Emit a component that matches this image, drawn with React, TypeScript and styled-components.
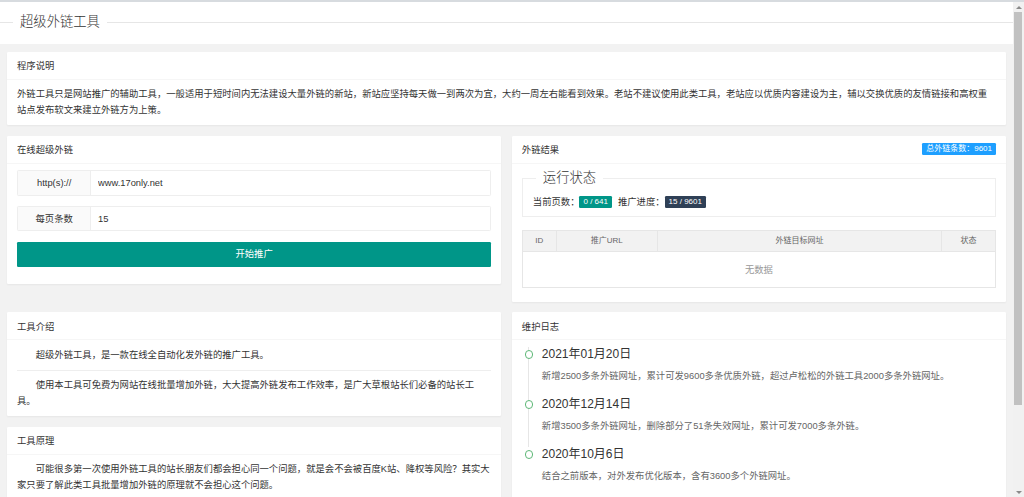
import React from "react";
import styled, { createGlobalStyle } from "styled-components";

const GlobalStyle = createGlobalStyle`
  * { box-sizing: border-box; }
  html, body { margin: 0; height: 100%; overflow: hidden; }
  body {
    font-family: "Liberation Sans", "Noto Sans CJK SC", sans-serif;
    font-size: 9.333px;
    color: #333;
    text-spacing-trim: space-all;
  }
  #root { height: 100%; }
`;

const Window = styled.div`
  height: 100%;
  display: flex;
  border-top: 2px solid #d7dbdf;
  background: #f2f2f2;
`;

const Viewport = styled.div`
  flex: 1;
  min-width: 0;
  overflow: hidden;
`;

const Rail = styled.div`
  width: 11px;
  flex: none;
  display: flex;
  flex-direction: column;
  background: #f1f1f1;
`;

const RailButton = styled.div<{ $dir: "up" | "down" }>`
  height: 10px;
  flex: none;
  display: flex;
  align-items: center;
  justify-content: center;
  &::before {
    content: "";
    width: 0;
    height: 0;
    border-left: 3px solid transparent;
    border-right: 3px solid transparent;
    ${(p) =>
      p.$dir === "up"
        ? "border-bottom: 3px solid #8a8a8a;"
        : "border-top: 3px solid #8a8a8a;"}
  }
`;

const RailTrack = styled.div`
  flex: 1;
  display: flex;
  flex-direction: column;
`;

const Thumb = styled.div`
  height: 393px;
  margin: 0 2px 0 1px;
  background: #c1c1c1;
`;

const Header = styled.header`
  background: #fff;
  height: 42px;
  padding-top: 10px;
`;

const TitleField = styled.fieldset`
  margin: 0;
  padding: 0;
  border: none;
  border-top: 1px solid #e6e6e6;
`;

const TitleLegend = styled.legend`
  margin-left: 13.33px;
  padding: 0 6.67px;
  font-size: 13.33px;
  line-height: 20px;
  font-weight: 300;
  color: #333;
`;

const Page = styled.main`
  padding: 7.67px 7px 7px;
  display: flex;
  flex-direction: column;
  gap: 10.67px;
`;

const Row = styled.div`
  display: grid;
  grid-template-columns: 1fr 1fr;
  gap: 10.67px;
  align-items: start;
`;

const Column = styled.div`
  display: flex;
  flex-direction: column;
  gap: 10.67px;
`;

const Card = styled.section`
  background: #fff;
  border-radius: 1.33px;
  box-shadow: 0 1px 2px 0 rgba(0, 0, 0, 0.05);
`;

const CardHeader = styled.div`
  height: 28px;
  padding: 0 10px;
  border-bottom: 1px solid #f6f6f6;
  color: #333;
  display: flex;
  align-items: center;
  justify-content: space-between;
`;

const CardBody = styled.div`
  padding: 6.67px 10px;
  line-height: 16px;
`;

const Para = styled.p<{ $indent?: boolean }>`
  margin: 0;
  text-indent: ${(p) => (p.$indent ? "2em" : "0")};
`;

const Rule = styled.hr`
  margin: 6.67px 0;
  height: 1px;
  border: none;
  background: #eee;
`;

const InputGroup = styled.div`
  display: flex;
  height: 25.33px;
  border: 1px solid #eee;
  border-radius: 1.33px;
  margin-bottom: 10.33px;
`;

const InputLabel = styled.label`
  width: 73.33px;
  flex: none;
  background: #fafafa;
  border-right: 1px solid #eee;
  display: flex;
  align-items: center;
  justify-content: center;
  color: #333;
`;

const TextInput = styled.input`
  flex: 1;
  min-width: 0;
  border: none;
  padding: 0 6.67px;
  font: inherit;
  color: #333;
  background: #fff;
  outline: none;
`;

const PrimaryButton = styled.button`
  display: block;
  width: 100%;
  height: 25.33px;
  margin-bottom: 10px;
  background: #009688;
  color: #fff;
  border: none;
  border-radius: 1.33px;
  font: inherit;
  cursor: pointer;
`;

const Badge = styled.span<{ $bg: string }>`
  display: inline-block;
  height: 12px;
  line-height: 12px;
  padding: 0 4px;
  font-size: 8px;
  color: #fff;
  border-radius: 1.33px;
  background: ${(p) => p.$bg};
`;

const StatusField = styled.fieldset`
  margin: 0;
  padding: 0 10px 6.67px;
  border: 1px solid #eee;
`;

const StatusLegend = styled.legend`
  margin-left: 3.33px;
  padding: 0 6.67px;
  font-size: 13.33px;
  line-height: 16.67px;
  font-weight: 300;
  color: #333;
`;

const StatusRow = styled.div`
  display: flex;
  align-items: center;
  height: 16px;
  margin-top: 6.67px;
  & > ${Badge} {
    margin-right: 6px;
  }
`;

const Table = styled.table`
  width: 100%;
  margin: 12.33px 0 6.67px;
  border-collapse: collapse;
  table-layout: fixed;
`;

const Th = styled.th`
  height: 21.67px;
  padding: 0;
  border: 1px solid #e6e6e6;
  background: #f2f2f2;
  color: #666;
  font-size: 8px;
  font-weight: 400;
  text-align: center;
`;

const EmptyCell = styled.td`
  height: 36px;
  border: 1px solid #e6e6e6;
  text-align: center;
  color: #999;
`;

const Timeline = styled.ul`
  list-style: none;
  margin: 0;
  padding: 0 0 0 3.33px;
`;

const TimelineItem = styled.li`
  position: relative;
  padding-bottom: 12.67px;
  &::before {
    content: "";
    position: absolute;
    left: 3.33px;
    top: 0;
    width: 1px;
    height: 100%;
    background: #e6e6e6;
  }
  &:last-child::before {
    display: none;
  }
`;

const TimelineAxis = styled.i`
  position: absolute;
  left: -0.67px;
  top: 3px;
  width: 8.67px;
  height: 8.67px;
  border: 1.33px solid #5fb878;
  border-radius: 50%;
  background: #fff;
  z-index: 1;
`;

const TimelineContent = styled.div`
  padding-left: 16.67px;
`;

const TimelineTitle = styled.h3`
  margin: 0 0 6.67px;
  font-size: 12px;
  line-height: 14.67px;
  font-weight: 400;
  color: #333;
`;

const TimelineText = styled.p`
  margin: 0;
  line-height: 16px;
  color: #666;
`;

const logs = [
  {
    date: "2021年01月20日",
    text: "新增2500多条外链网址，累计可发9600多条优质外链，超过卢松松的外链工具2000多条外链网址。",
  },
  {
    date: "2020年12月14日",
    text: "新增3500多条外链网址，删除部分了51条失效网址，累计可发7000多条外链。",
  },
  {
    date: "2020年10月6日",
    text: "结合之前版本，对外发布优化版本，含有3600多个外链网址。",
  },
];

const columns = [
  { label: "ID", w: 34 },
  { label: "推广URL", w: 101 },
  { label: "外链目标网址", w: undefined },
  { label: "状态", w: 54 },
];

export default function App() {
  return (
    <>
      <GlobalStyle />
      <Window>
        <Viewport>
          <Header>
            <TitleField>
              <TitleLegend>超级外链工具</TitleLegend>
            </TitleField>
          </Header>
          <Page>
            <Card>
              <CardHeader>程序说明</CardHeader>
              <CardBody>
                <Para>
                  外链工具只是网站推广的辅助工具，一般适用于短时间内无法建设大量外链的新站，新站应坚持每天做一到两次为宜，大约一周左右能看到效果。老站不建议使用此类工具，老站应以优质内容建设为主，辅以交换优质的友情链接和高权重站点发布软文来建立外链方为上策。
                </Para>
              </CardBody>
            </Card>

            <Row>
              <Card>
                <CardHeader>在线超级外链</CardHeader>
                <CardBody>
                  <InputGroup>
                    <InputLabel>http(s)://</InputLabel>
                    <TextInput defaultValue="www.17only.net" />
                  </InputGroup>
                  <InputGroup>
                    <InputLabel>每页条数</InputLabel>
                    <TextInput defaultValue="15" />
                  </InputGroup>
                  <PrimaryButton>开始推广</PrimaryButton>
                </CardBody>
              </Card>

              <Card>
                <CardHeader>
                  <span>外链结果</span>
                  <Badge $bg="#1e9fff">总外链条数：9601</Badge>
                </CardHeader>
                <CardBody>
                  <StatusField>
                    <StatusLegend>运行状态</StatusLegend>
                    <StatusRow>
                      <span>当前页数：</span>
                      <Badge $bg="#009688">0 / 641</Badge>
                      <span>推广进度：</span>
                      <Badge $bg="#2f4056">15 / 9601</Badge>
                    </StatusRow>
                  </StatusField>
                  <Table>
                    <colgroup>
                      {columns.map((c) => (
                        <col key={c.label} style={c.w ? { width: c.w } : undefined} />
                      ))}
                    </colgroup>
                    <thead>
                      <tr>
                        {columns.map((c) => (
                          <Th key={c.label}>{c.label}</Th>
                        ))}
                      </tr>
                    </thead>
                    <tbody>
                      <tr>
                        <EmptyCell colSpan={4}>无数据</EmptyCell>
                      </tr>
                    </tbody>
                  </Table>
                </CardBody>
              </Card>
            </Row>

            <Row>
              <Column>
                <Card>
                  <CardHeader>工具介绍</CardHeader>
                  <CardBody>
                    <Para $indent>超级外链工具，是一款在线全自动化发外链的推广工具。</Para>
                    <Rule />
                    <Para $indent>
                      使用本工具可免费为网站在线批量增加外链，大大提高外链发布工作效率，是广大草根站长们必备的站长工具。
                    </Para>
                  </CardBody>
                </Card>
                <Card>
                  <CardHeader>工具原理</CardHeader>
                  <CardBody>
                    <Para $indent>
                      可能很多第一次使用外链工具的站长朋友们都会担心同一个问题，就是会不会被百度K站、降权等风险？其实大家只要了解此类工具批量增加外链的原理就不会担心这个问题。
                    </Para>
                    <Rule />
                    <Para $indent>
                      本工具利用的是各大站长查询类网站（如站长工具、爱站网等）的查询记录功能，当您使用这些网站查询自己的网站信息时，查询页面会生成一个带有您网站地址的页面，搜索引擎收录这些页面后便会形成外链。这些网站本身权重较高，收录速度快，因此能在短时间内为您的网站带来大量外链。
                    </Para>
                    <Rule />
                    <Para $indent>这类外链属于正常的查询记录，不会对网站造成任何不良影响，请放心使用。</Para>
                  </CardBody>
                </Card>
              </Column>

              <Card>
                <CardHeader>维护日志</CardHeader>
                <CardBody>
                  <Timeline>
                    {logs.map((log) => (
                      <TimelineItem key={log.date}>
                        <TimelineAxis />
                        <TimelineContent>
                          <TimelineTitle>{log.date}</TimelineTitle>
                          <TimelineText>{log.text}</TimelineText>
                        </TimelineContent>
                      </TimelineItem>
                    ))}
                  </Timeline>
                </CardBody>
              </Card>
            </Row>
          </Page>
        </Viewport>
        <Rail>
          <RailButton $dir="up" />
          <RailTrack>
            <Thumb />
          </RailTrack>
          <RailButton $dir="down" />
        </Rail>
      </Window>
    </>
  );
}
